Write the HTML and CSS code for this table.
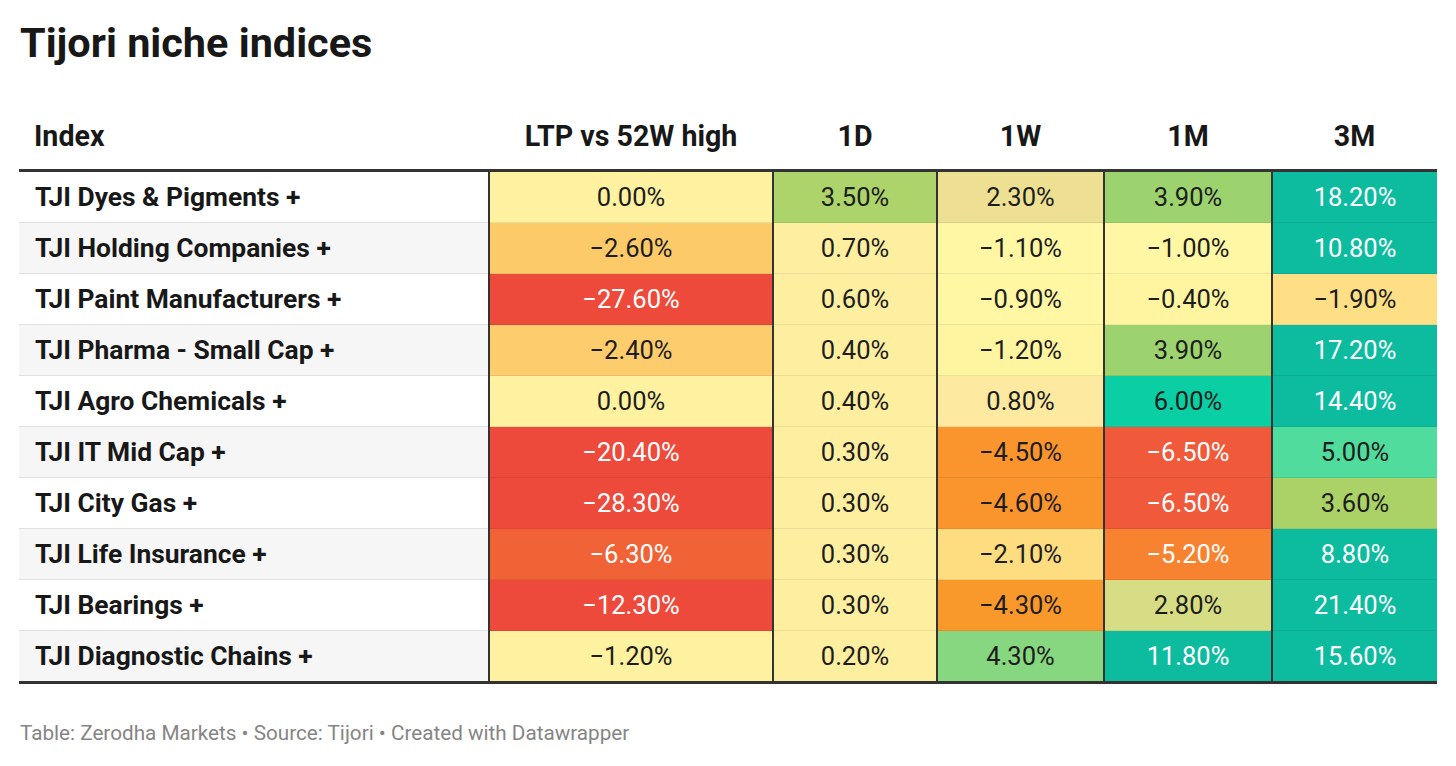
FILE: index.html
```html
<!DOCTYPE html>
<html>
<head>
<meta charset="utf-8">
<link rel="stylesheet" href="styles.css">
</head>
<body>
<div class="chart">
  <h1 class="title">Tijori niche indices</h1>
  <table class="tbl">
    <colgroup>
      <col class="c-index"><col class="c-ltp"><col class="c-1d"><col class="c-1w"><col class="c-1m"><col class="c-3m">
    </colgroup>
    <thead>
      <tr>
        <th class="h-left">Index</th>
        <th>LTP vs 52W high</th>
        <th>1D</th>
        <th>1W</th>
        <th>1M</th>
        <th>3M</th>
      </tr>
    </thead>
    <tbody>
      <tr>
        <td class="name">TJI Dyes &amp; Pigments +</td>
        <td class="v y0">0.00%</td>
        <td class="v g35">3.50%</td>
        <td class="v k23">2.30%</td>
        <td class="v g39">3.90%</td>
        <td class="v teal w">18.20%</td>
      </tr>
      <tr class="alt">
        <td class="name">TJI Holding Companies +</td>
        <td class="v o26">−2.60%</td>
        <td class="v y1">0.70%</td>
        <td class="v y2">−1.10%</td>
        <td class="v y2">−1.00%</td>
        <td class="v teal w">10.80%</td>
      </tr>
      <tr>
        <td class="name">TJI Paint Manufacturers +</td>
        <td class="v red w">−27.60%</td>
        <td class="v y1">0.60%</td>
        <td class="v y2">−0.90%</td>
        <td class="v y3">−0.40%</td>
        <td class="v o19">−1.90%</td>
      </tr>
      <tr class="alt">
        <td class="name">TJI Pharma - Small Cap +</td>
        <td class="v o24">−2.40%</td>
        <td class="v y1">0.40%</td>
        <td class="v y3">−1.20%</td>
        <td class="v g39">3.90%</td>
        <td class="v teal w">17.20%</td>
      </tr>
      <tr>
        <td class="name">TJI Agro Chemicals +</td>
        <td class="v y0">0.00%</td>
        <td class="v y1">0.40%</td>
        <td class="v y4">0.80%</td>
        <td class="v t60">6.00%</td>
        <td class="v teal w">14.40%</td>
      </tr>
      <tr class="alt">
        <td class="name">TJI IT Mid Cap +</td>
        <td class="v red w">−20.40%</td>
        <td class="v y1">0.30%</td>
        <td class="v o45">−4.50%</td>
        <td class="v r65 w">−6.50%</td>
        <td class="v t50">5.00%</td>
      </tr>
      <tr>
        <td class="name">TJI City Gas +</td>
        <td class="v red w">−28.30%</td>
        <td class="v y1">0.30%</td>
        <td class="v o45">−4.60%</td>
        <td class="v r65 w">−6.50%</td>
        <td class="v g36">3.60%</td>
      </tr>
      <tr class="alt">
        <td class="name">TJI Life Insurance +</td>
        <td class="v r63 w">−6.30%</td>
        <td class="v y1">0.30%</td>
        <td class="v o21">−2.10%</td>
        <td class="v o52 w">−5.20%</td>
        <td class="v teal w">8.80%</td>
      </tr>
      <tr>
        <td class="name">TJI Bearings +</td>
        <td class="v red w">−12.30%</td>
        <td class="v y1">0.30%</td>
        <td class="v o43">−4.30%</td>
        <td class="v k28">2.80%</td>
        <td class="v teal w">21.40%</td>
      </tr>
      <tr class="alt last">
        <td class="name">TJI Diagnostic Chains +</td>
        <td class="v y0">−1.20%</td>
        <td class="v y1">0.20%</td>
        <td class="v g43">4.30%</td>
        <td class="v teal w">11.80%</td>
        <td class="v teal w">15.60%</td>
      </tr>
    </tbody>
  </table>
  <p class="footer">Table: Zerodha Markets • Source: Tijori • Created with Datawrapper</p>
</div>
</body>
</html>
```

FILE: styles.css
```css
html, body {
  margin: 0;
  padding: 0;
  background: #ffffff;
}

body {
  font-family: Roboto, "Liberation Sans", sans-serif;
  color: #1d1d1d;
}

.chart {
  padding: 18px 19px 0 19px;
}

.title {
  margin: 0 0 0 1px;
  font-size: 41.4px;
  line-height: 50px;
  font-weight: 700;
  color: #181818;
}

.tbl {
  margin-top: 51px;
  width: 1418px;
  table-layout: fixed;
  border-collapse: collapse;
  border-bottom: 3px solid #333333;
}

.c-index { width: 470px; }
.c-ltp { width: 284px; }
.c-1d { width: 164px; }
.c-1w { width: 167px; }
.c-1m { width: 168px; }
.c-3m { width: 165px; }

thead th {
  font-size: 28.6px;
  line-height: 34px;
  font-weight: 700;
  color: #181818;
  text-align: center;
  padding: 0 0 16px 0;
  background: #ffffff;
}

thead th.h-left {
  text-align: left;
  padding-left: 15px;
}

thead tr {
  border-bottom: 3px solid #333333;
}

tbody td {
  height: 50px;
  padding: 0;
  font-size: 25.5px;
  line-height: 30px;
  border-bottom: 1px solid rgba(0, 0, 0, 0.07);
}

tbody tr.last td {
  border-bottom: none;
}

td.name {
  font-size: 26.4px;
  font-weight: 700;
  padding-left: 16px;
  color: #181818;
  background: #ffffff;
  border-bottom: 1px solid #e0e0e0;
}

tr.alt td.name {
  background: #f6f6f6;
}

td.v {
  text-align: center;
  border-left: 2.5px solid #333333;
  color: #1d1d1d;
}

td.w { color: #ffffff; }

.y0 { background: #fef1a0; }
.y1 { background: #fdeea0; }
.y2 { background: #fff7a3; }
.y3 { background: #fff5a1; }
.y4 { background: #fdeaa0; }
.k23 { background: #ede092; }
.k28 { background: #d6dd84; }
.g35 { background: #acd46a; }
.g36 { background: #aad266; }
.g39 { background: #9cd36e; }
.g43 { background: #86d780; }
.t50 { background: #50dc9c; }
.t60 { background: #0bcfa4; }
.teal { background: #0dbc9f; }
.o19 { background: #fedf85; }
.o21 { background: #fedc80; }
.o24 { background: #fdcc6c; }
.o26 { background: #fdca6a; }
.o43 { background: #fa992b; }
.o45 { background: #fa952d; }
.o52 { background: #f7822f; }
.r63 { background: #f16337; }
.r65 { background: #f05a3a; }
.red { background: #ee4a3c; }

.footer {
  margin: 37px 0 0 1px;
  font-size: 20.7px;
  line-height: 24px;
  color: #858585;
}
```
